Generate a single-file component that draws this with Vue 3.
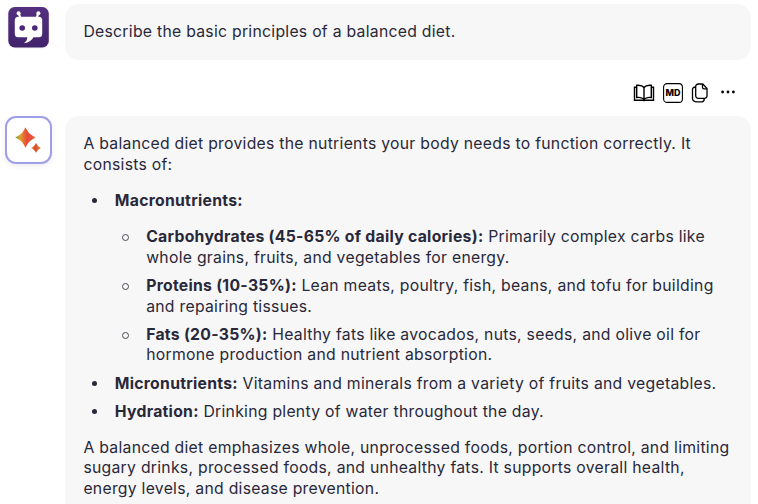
<script setup>
const nutrients = [
  { name: 'Carbohydrates (45-65% of daily calories):', text: 'Primarily complex carbs like whole grains, fruits, and vegetables for energy.' },
  { name: 'Proteins (10-35%):', text: 'Lean meats, poultry, fish, beans, and tofu for building and repairing tissues.' },
  { name: 'Fats (20-35%):', text: 'Healthy fats like avocados, nuts, seeds, and olive oil for hormone production and nutrient absorption.' },
]
</script>

<template>
  <main class="chat">
    <section class="row">
      <div class="avatar">
        <svg width="48" height="48" viewBox="0 0 48 48">
          <defs>
            <linearGradient id="violet" x1="0" y1="0" x2="0" y2="1">
              <stop offset="0" stop-color="#54307f" />
              <stop offset="1" stop-color="#41236b" />
            </linearGradient>
          </defs>
          <rect x="2.5" y="2.5" width="42" height="42" rx="8" fill="#f3f0f7" />
          <rect x="3.3" y="3" width="40.5" height="40.5" rx="6.5" fill="url(#violet)" />
          <path d="M13.700 9L15.300 14M33.300 9L31.700 14" stroke="#fff" stroke-width="2.200" />
          <circle cx="13.600" cy="9.200" r="2" fill="#fff" />
          <circle cx="33.400" cy="9.200" r="2" fill="#fff" />
          <path d="M13.300 12.800h20.400a3.500 3.500 0 0 1 3.500 3.500V29.700a3.500 3.500 0 0 1-3.500 3.500H28.500c-1.500 3-4.500 5.300-9.500 6 2.300-1.800 3.400-3.800 3.200-6H13.300a3.500 3.500 0 0 1-3.500-3.500V16.300a3.500 3.500 0 0 1 3.500-3.500z" fill="#fff" />
          <circle cx="17.200" cy="24" r="2.800" fill="#4a2778" />
          <circle cx="29.800" cy="24" r="2.800" fill="#4a2778" />
        </svg>
      </div>
      <article class="bubble question">Describe the basic principles of a balanced diet.</article>
    </section>

    <div class="tools">
      <svg width="22" height="20" viewBox="0 0 22 20" fill="none" stroke="#000" stroke-width="1.400">
        <path d="M11 4.500C9.500 2.500 6.500 2 3.700 2.300v12.200c3-.3 5.800.2 7.300 2.200 1.500-2 4.300-2.500 7.300-2.200V2.300C15.500 2 12.500 2.500 11 4.500zM11 4.500v12" />
        <path d="M3.700 4.200H1.500v13h7.700c.8 0 1.100.4 1.800.4s1-.4 1.800-.4h7.700v-13h-2.200" />
      </svg>
      <svg width="20" height="20" viewBox="0 0 20 20">
        <rect x=".6" y=".6" width="18.800" height="18.800" rx="3.500" fill="#fff" stroke="#000" stroke-width="1.100" />
        <text class="md" x="10" y="13" text-anchor="middle">MD</text>
      </svg>
      <svg width="18" height="20" viewBox="0 0 18 20" fill="none" stroke="#000" stroke-width="1.300" stroke-linejoin="round">
        <path d="M7.200 1h4.600l4.200 4.500v7.300a2.500 2.500 0 0 1-2.500 2.500H7.200a2.500 2.500 0 0 1-2.500-2.500V3.500A2.500 2.500 0 0 1 7.200 1z" />
        <path d="M11.500 1v3.200c0 1 .6 1.600 1.600 1.600H16M4.500 4C2.500 4 1.500 5 1.500 6.500v9A3.300 3.300 0 0 0 4.800 18.800h6c1.500 0 2.500-1.200 2.500-3.300" />
      </svg>
      <svg width="16" height="20" viewBox="0 0 16 20">
        <circle cx="2.600" cy="9" r="1.400" /><circle cx="8" cy="9" r="1.400" /><circle cx="13.400" cy="9" r="1.400" />
      </svg>
    </div>

    <section class="row">
      <div class="avatar assistant">
        <svg width="44" height="44" viewBox="0 0 44 44">
          <defs>
            <linearGradient id="spark" x1="0" y1="0" x2="1" y2="0">
              <stop offset="0" stop-color="#62a744" />
              <stop offset=".25" stop-color="#e2a12c" />
              <stop offset=".55" stop-color="#e84b36" />
              <stop offset=".8" stop-color="#e65038" />
              <stop offset="1" stop-color="#e88a30" />
            </linearGradient>
            <linearGradient id="ember" x1="0" y1="0" x2="1" y2="0">
              <stop offset="0" stop-color="#e5a336" />
              <stop offset=".4" stop-color="#d9482f" />
              <stop offset="1" stop-color="#e5803a" />
            </linearGradient>
          </defs>
          <path d="M18.500 9.200c2.500 5.300 5 7.800 10.300 10.200-5.300 2.400-7.800 5-10.300 10.300-2.500-5.300-5-7.900-10.300-10.300 5.300-2.400 7.800-4.900 10.300-10.200z" fill="url(#spark)" />
          <path d="M29 25c1.200 2.400 2.500 3.700 4.900 4.900-2.400 1.200-3.700 2.500-4.900 4.900-1.200-2.400-2.500-3.700-4.900-4.900 2.400-1.200 3.700-2.500 4.900-4.900z" fill="url(#ember)" />
        </svg>
      </div>
      <article class="bubble answer">
        <p>A balanced diet provides the nutrients your body needs to function correctly. It consists of:</p>
        <ul>
          <li>
            <strong>Macronutrients:</strong>
            <ul class="nested">
              <li v-for="item in nutrients" :key="item.name"><strong>{{ item.name }}</strong> {{ item.text }}</li>
            </ul>
          </li>
          <li><strong>Micronutrients:</strong> Vitamins and minerals from a variety of fruits and vegetables.</li>
          <li><strong>Hydration:</strong> Drinking plenty of water throughout the day.</li>
        </ul>
        <p>A balanced diet emphasizes whole, unprocessed foods, portion control, and limiting sugary drinks, processed foods, and unhealthy fats. It supports overall health, energy levels, and disease prevention.</p>
      </article>
    </section>
  </main>
</template>

<style>
body { background: #fff; overflow: hidden; }
</style>

<style scoped>
.chat {
  box-sizing: border-box;
  height: 504px;
  overflow: hidden;
  padding: 4px 7px 0 5px;
  color: #29283a;
  font: 15.75px/20.7px Inter, sans-serif;
  letter-spacing: .275px;
}
.row { display: flex; align-items: flex-start; gap: 13px; }
.avatar { flex: none; box-sizing: border-box; width: 47px; height: 48px; }
.avatar svg { display: block; }
.assistant {
  display: grid;
  place-items: center;
  border: 2px solid #9f9fe8;
  border-radius: 11px;
  background: #fff;
  box-shadow: 0 2px 6px #00000014;
}
.bubble {
  box-sizing: border-box;
  flex: 1;
  min-width: 0;
  padding: 18px 18px 18px 18.400px;
  border-radius: 14px;
  background: #f7f7f7;
}
.question { height: 56px; }
.answer { height: 420px; }
.tools {
  display: flex;
  justify-content: flex-end;
  gap: 8px;
  height: 33px;
  padding: 23px 15px 0 0;
}
.tools svg:last-child { margin-left: 3px; }
.md { font: 800 9px Inter, sans-serif; letter-spacing: 0; }
p { margin: 0; }
ul { margin: 15.500px 0 15.300px; padding-left: 31.400px; list-style: none; }
.nested { margin-bottom: 0; }
li { position: relative; }
li::before {
  content: "";
  position: absolute;
  top: 7px;
  left: -23px;
  box-sizing: border-box;
  width: 5px;
  height: 5px;
  border-radius: 50%;
  background: #29283a;
}
.nested > li::before {
  left: -24px;
  width: 7px;
  height: 7px;
  border: 1px solid #4a4958;
  background: transparent;
}
li + li { margin-top: 7.400px; }
strong { font-weight: 700; }
</style>
